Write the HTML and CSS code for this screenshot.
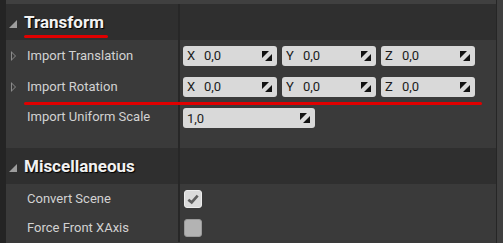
FILE: index.html
```html
<!DOCTYPE html>
<html lang="en">
<head>
  <meta charset="UTF-8">
  <title>Details</title>
  <link rel="stylesheet" href="styles.css">
</head>
<body>
  <div class="window">
    <div class="gutter"></div>
    <div class="panel">
      <div class="topbar"></div>

      <div class="row category">
        <div class="name"><span class="caret"></span><span class="title marked">Transform</span></div>
        <div class="value"></div>
      </div>

      <div class="row prop">
        <div class="name"><span class="expander"></span>Import Translation</div>
        <div class="value">
          <div class="field vec"><span class="axis">X</span>0,0<span class="spin"><svg viewBox="0 0 10 10"><path d="M0 0H7L0 7Z M10 10H3L10 3Z"/></svg></span></div>
          <div class="field vec"><span class="axis">Y</span>0,0<span class="spin"><svg viewBox="0 0 10 10"><path d="M0 0H7L0 7Z M10 10H3L10 3Z"/></svg></span></div>
          <div class="field vec"><span class="axis">Z</span>0,0<span class="spin"><svg viewBox="0 0 10 10"><path d="M0 0H7L0 7Z M10 10H3L10 3Z"/></svg></span></div>
        </div>
      </div>

      <div class="row prop">
        <div class="name"><span class="expander"></span>Import Rotation</div>
        <div class="value">
          <div class="field vec"><span class="axis">X</span>0,0<span class="spin"><svg viewBox="0 0 10 10"><path d="M0 0H7L0 7Z M10 10H3L10 3Z"/></svg></span></div>
          <div class="field vec"><span class="axis">Y</span>0,0<span class="spin"><svg viewBox="0 0 10 10"><path d="M0 0H7L0 7Z M10 10H3L10 3Z"/></svg></span></div>
          <div class="field vec"><span class="axis">Z</span>0,0<span class="spin"><svg viewBox="0 0 10 10"><path d="M0 0H7L0 7Z M10 10H3L10 3Z"/></svg></span></div>
        </div>
        <div class="redline"></div>
      </div>

      <div class="row prop tall">
        <div class="name">Import Uniform Scale</div>
        <div class="value">
          <div class="field scalar">1,0<span class="spin"><svg viewBox="0 0 10 10"><path d="M0 0H7L0 7Z M10 10H3L10 3Z"/></svg></span></div>
        </div>
      </div>

      <div class="row category">
        <div class="name"><span class="caret"></span><span class="title">Miscellaneous</span></div>
        <div class="value"></div>
      </div>

      <div class="row prop check">
        <div class="name">Convert Scene</div>
        <div class="value"><span class="box on"><svg viewBox="0 0 12 12"><path d="M2.5 6.5L5 8.5L9.5 3.5"/></svg></span></div>
      </div>

      <div class="row prop check">
        <div class="name">Force Front XAxis</div>
        <div class="value"><span class="box"></span></div>
      </div>
    </div>
    <div class="scroll"></div>
  </div>
</body>
</html>
```

FILE: styles.css
```css
body {
  margin: 0;
  background-color: #232323;
  font-family: Roboto, "Liberation Sans", sans-serif;
}
.window {
  display: flex;
  width: 503px;
  height: 243px;
  overflow: hidden;
}
.gutter {
  width: 6px;
  background-color: #242424;
}
.panel {
  flex: 1;
  background-color: #3a3a3a;
  position: relative;
}
.scroll {
  width: 6px;
  background-color: #3f3f3f;
  border-left: 1px solid #262626;
}
.topbar {
  height: 4px;
  background-color: #404040;
}
.row {
  display: flex;
}
.name {
  width: 174px;
  display: flex;
  align-items: center;
  color: #d2d2d2;
  font-size: 13px;
  padding-left: 21px;
  box-sizing: border-box;
  border-right: 2px solid #272727;
}
.value {
  flex: 1;
  display: flex;
  align-items: center;
  gap: 5px;
  padding-left: 3px;
}

/* category header */
.category {
  height: 36px;
  background-color: #2f2f2f;
}
.category .name {
  padding-left: 3px;
}
.caret {
  width: 0;
  height: 0;
  border-left: 8px solid transparent;
  border-bottom: 8px solid #9d9d9d;
  margin-right: 7px;
  margin-top: 3px;
}
.title {
  position: relative;
  color: #f2f2f2;
  font-weight: bold;
  font-size: 17px;
  text-shadow: 1px 1px 1px #000;
}
.marked::after {
  content: "";
  position: absolute;
  left: 0;
  right: -4px;
  bottom: -6px;
  height: 3px;
  border-radius: 2px;
  background-color: #e00000;
}

/* property rows */
.prop {
  height: 31px;
  position: relative;
}
.tall {
  height: 46px;
}
.tall .value {
  align-items: flex-start;
  padding-top: 6px;
}
.tall .name {
  align-items: flex-start;
  padding-top: 7px;
}
.expander {
  width: 0;
  height: 0;
  border-top: 5px solid transparent;
  border-bottom: 5px solid transparent;
  border-left: 5px solid #8a8a8a;
  margin-left: -16px;
  margin-right: 11px;
  position: relative;
}
.expander::after {
  content: "";
  position: absolute;
  left: -4px;
  top: -3px;
  border-top: 3px solid transparent;
  border-bottom: 3px solid transparent;
  border-left: 3px solid #3a3a3a;
}
.field {
  height: 20px;
  display: flex;
  align-items: center;
  background-color: #d9d9d9;
  border-radius: 3px;
  color: #1c1c1c;
  font-size: 13px;
  box-sizing: border-box;
  padding-left: 4px;
  position: relative;
}
.vec {
  width: 94px;
}
.scalar {
  width: 132px;
}
.axis {
  width: 17px;
}
.spin {
  position: absolute;
  right: 5px;
  top: 5px;
  width: 10px;
  height: 10px;
}
.spin svg {
  display: block;
  width: 10px;
  height: 10px;
  fill: #111;
}
.redline {
  position: absolute;
  left: 18px;
  width: 458px;
  bottom: -3px;
  height: 3px;
  border-radius: 2px;
  background-color: #e00000;
  z-index: 2;
}

/* checkboxes */
.check {
  height: 29px;
}
.box {
  width: 18px;
  height: 18px;
  box-sizing: border-box;
  border-radius: 3px;
  border: 1px solid #9a9a9a;
  background-color: #b3b3b3;
  margin-left: 1px;
}
.box.on {
  background-color: #dadada;
  border-color: #ececec;
}
.box svg {
  display: block;
  width: 16px;
  height: 16px;
  fill: none;
  stroke: #5e5e5e;
  stroke-width: 2;
}
```
